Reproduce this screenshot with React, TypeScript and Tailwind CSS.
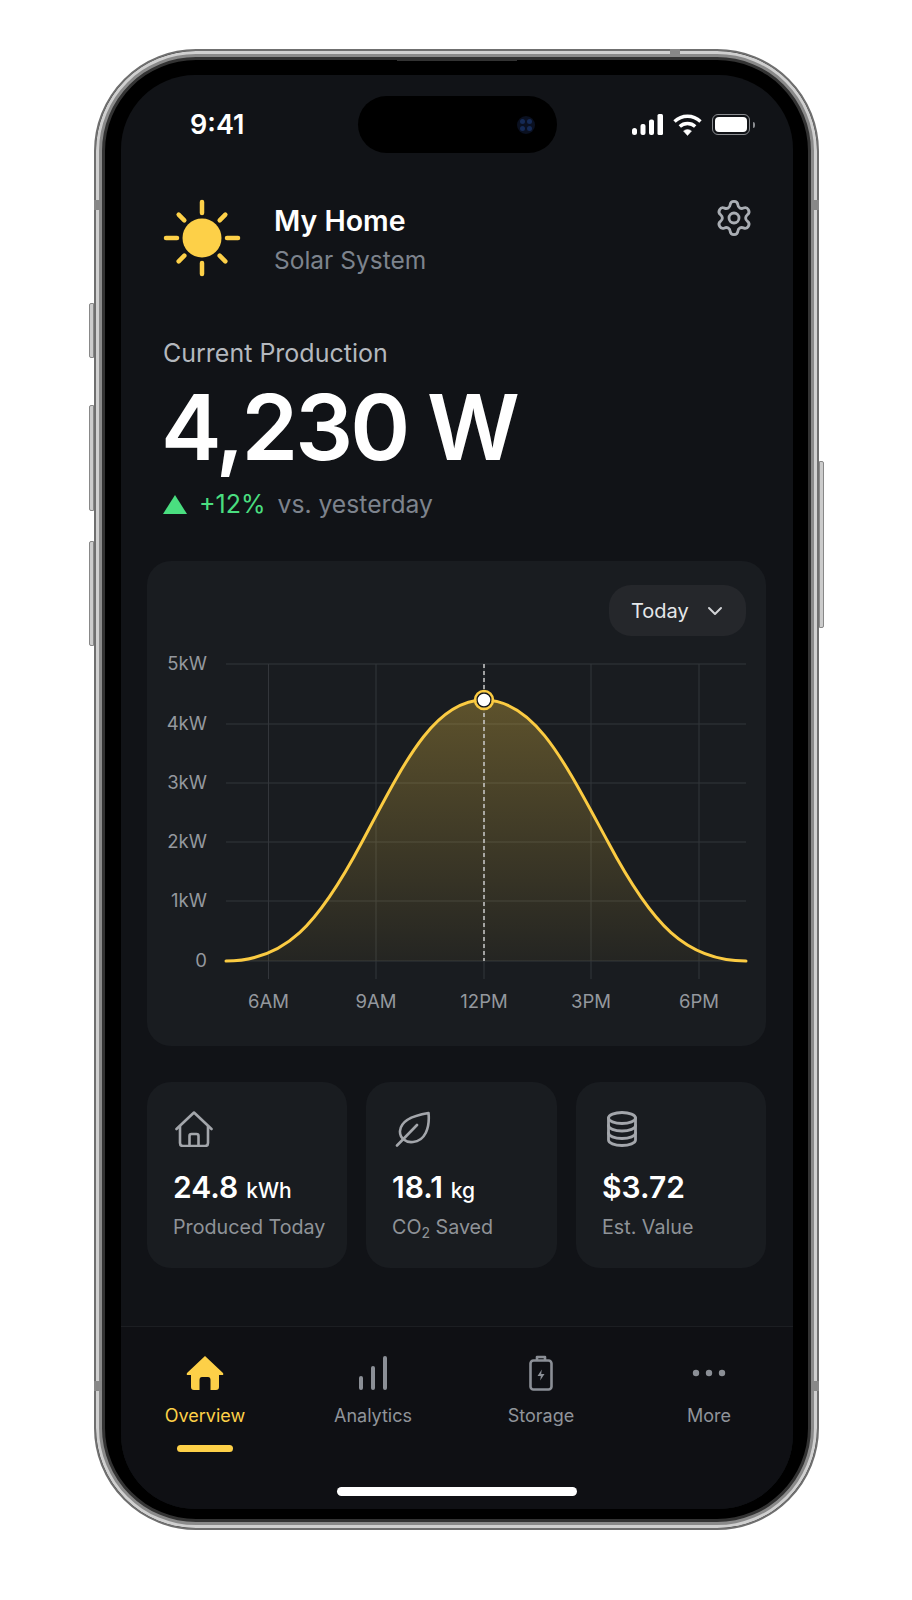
import { Settings, ChevronDown } from "lucide-react";

const yLabels = [
  { label: "5kW", y: 664 },
  { label: "4kW", y: 724 },
  { label: "3kW", y: 783 },
  { label: "2kW", y: 842 },
  { label: "1kW", y: 901 },
  { label: "0", y: 961 },
];

const xLabels = [
  { label: "6AM", x: 268.5 },
  { label: "9AM", x: 376 },
  { label: "12PM", x: 484 },
  { label: "3PM", x: 591 },
  { label: "6PM", x: 699 },
];

const curve =
  "M226 961 C285 961 318 925 362 842 C404 763 434 700 484 700 C535 700 565 763 608 842 C652 925 686 961 746 961";

function Sun() {
  const rays = [0, 45, 90, 135, 180, 225, 270, 315];
  return (
    <svg width="78" height="78" viewBox="0 0 78 78" className="shrink-0">
      <circle cx="39" cy="39" r="19.5" fill="#fdd048" />
      {rays.map((r) => (
        <line
          key={r}
          x1="39"
          y1={r % 90 === 0 ? 3 : 6}
          x2="39"
          y2={r % 90 === 0 ? 14 : 14}
          stroke="#fdd048"
          strokeWidth="4.5"
          strokeLinecap="round"
          transform={`rotate(${r} 39 39)`}
        />
      ))}
    </svg>
  );
}

function StatusIcons() {
  return (
    <div className="flex items-center gap-[10px] pr-[38px]">
      <svg width="31" height="22" viewBox="0 0 31 22" fill="#fff">
        <rect x="0" y="14" width="5" height="7" rx="2.5" />
        <rect x="8.5" y="10" width="5" height="11" rx="2" />
        <rect x="17" y="5.5" width="5" height="15.5" rx="2" />
        <rect x="25.5" y="0" width="5.5" height="21" rx="1.5" />
      </svg>
      <svg width="29" height="22" viewBox="0 0 29 22" fill="none" stroke="#fff">
        <path d="M1.5 7.5 C9 0.5 20 0.5 27.5 7.5" strokeWidth="3.4" />
        <path d="M6.8 12.5 C11 8.5 18 8.5 22.2 12.5" strokeWidth="3.4" />
        <path d="M10.5 17 L14.5 21.5 L18.5 17 C16 15 13 15 10.5 17Z" fill="#fff" strokeWidth="0.5" />
      </svg>
      <div className="flex items-center gap-[3px]">
        <div className="flex h-[21px] w-[38px] rounded-[6px] border border-[#8b8d91] p-[2px]">
          <div className="flex-1 rounded-[4px] bg-white" />
        </div>
        <div className="h-[6px] w-[2px] rounded-r-full bg-[#8b8d91]" />
      </div>
    </div>
  );
}

function Chart() {
  return (
    <svg viewBox="147 650 620 380" width="620" height="380" className="block">
      <defs>
        <linearGradient id="fill" x1="0" y1="0" x2="0" y2="1">
          <stop offset="0%" stopColor="#fdd048" stopOpacity="0.3" />
          <stop offset="100%" stopColor="#fdd048" stopOpacity="0.05" />
        </linearGradient>
      </defs>
      {yLabels.map((l) => (
        <g key={l.label}>
          <line x1="226" x2="746" y1={l.y} y2={l.y} stroke="#33363b" strokeWidth="1" />
          <text x="207" y={l.y + 6} textAnchor="end" fontSize="18.5" fill="#94989e">
            {l.label}
          </text>
        </g>
      ))}
      {xLabels.map((l) => (
        <g key={l.label}>
          <line x1={l.x} x2={l.x} y1="664" y2="979" stroke="#33363b" strokeWidth="1" />
          <text x={l.x} y="1008" textAnchor="middle" fontSize="18.5" fill="#94989e">
            {l.label}
          </text>
        </g>
      ))}
      <path d={curve + " Z"} fill="url(#fill)" />
      <line x1="484" x2="484" y1="664" y2="961" stroke="#c9c9c9" strokeWidth="1.5" strokeDasharray="4 3" />
      <path d={curve} fill="none" stroke="#fbcb42" strokeWidth="3" strokeLinecap="round" />
      <circle cx="484" cy="700" r="7" fill="#fff" stroke="#16181c" strokeWidth="1.5" />
      <circle cx="484" cy="700" r="9" fill="none" stroke="#fbcb42" strokeWidth="2.5" />
    </svg>
  );
}

function HouseIcon() {
  return (
    <svg width="38" height="36" viewBox="0 0 38 36" fill="none" stroke="#a3a6ab" strokeWidth="2.6" strokeLinejoin="round" strokeLinecap="round" className="ml-[2px]">
      <path d="M1.5 18 L19 1.5 L36.5 18" />
      <path d="M5 15.5 V32 Q5 35 8 35 H30 Q33 35 33 32 V15.5" />
      <path d="M14.5 35 V25 Q14.5 23 16.5 23 H21.5 Q23.5 23 23.5 25 V35" />
    </svg>
  );
}

function LeafIcon() {
  return (
    <svg width="36" height="36" viewBox="0 0 36 36" fill="none" stroke="#a3a6ab" strokeWidth="2.6" strokeLinejoin="round" strokeLinecap="round" className="ml-[3px]">
      <path d="M33.5 2 C21 4 6 8 5 20 C4.5 27 11 32 18 31 C30 30 35 17 33.5 2 Z" />
      <path d="M2 34.5 L22 14" />
    </svg>
  );
}

function CoinsIcon() {
  return (
    <svg width="30" height="36" viewBox="0 0 30 36" fill="none" stroke="#a3a6ab" strokeWidth="2.8" strokeLinecap="round" className="ml-[5px]">
      <ellipse cx="15" cy="7" rx="13.5" ry="5.5" />
      <path d="M1.5 7 V29 C1.5 32 7.5 34.5 15 34.5 C22.5 34.5 28.5 32 28.5 29 V7" />
      <path d="M1.5 14.5 C1.5 17.5 7.5 20 15 20 C22.5 20 28.5 17.5 28.5 14.5" />
      <path d="M1.5 22 C1.5 25 7.5 27.5 15 27.5 C22.5 27.5 28.5 25 28.5 22" />
    </svg>
  );
}

function StatCard({
  icon,
  value,
  unit,
  label,
  className,
}: {
  icon: React.ReactNode;
  value: string;
  unit?: string;
  label: React.ReactNode;
  className: string;
}) {
  return (
    <div className={`flex h-[186px] flex-col rounded-[24px] bg-[#191c20] pt-[29px] pl-[26px] ${className}`}>
      <div className="flex h-[36px] items-center">{icon}</div>
      <div className="mt-[20px] flex h-[40px] items-baseline gap-[8px] leading-[40px]">
        <span className="text-[30px] font-semibold text-white">{value}</span>
        {unit && <span className="text-[21px] font-medium text-white">{unit}</span>}
      </div>
      <div className="mt-[6px] text-[19.7px] leading-[28px] text-[#8f9398]">{label}</div>
    </div>
  );
}

function NavHome() {
  return (
    <svg width="38" height="34" viewBox="0 0 38 34" fill="#fdd048">
      <path d="M19 0 L37 17 Q38 19 36 19 H33 V31 Q33 34 30 34 H24.5 V24 Q24.5 21 22 21 H16 Q13.5 21 13.5 24 V34 H8 Q5 34 5 31 V19 H2 Q0 19 1 17 Z" />
    </svg>
  );
}

function NavBars() {
  return (
    <svg width="30" height="34" viewBox="0 0 30 34" fill="none" stroke="#8b8f96" strokeWidth="4" strokeLinecap="round">
      <path d="M3 32 V22" />
      <path d="M15 32 V12" />
      <path d="M27 32 V2" />
    </svg>
  );
}

function NavBattery() {
  return (
    <svg width="24" height="36" viewBox="0 0 24 36" fill="none" stroke="#8b8f96" strokeWidth="2.6" strokeLinejoin="round">
      <rect x="1.5" y="5.5" width="21" height="29" rx="3" />
      <path d="M8 5.5 V2 H16 V5.5" />
      <path d="M12.8 14.5 L8.5 21 H11.8 L11.2 25.5 L15.5 19 H12.2 Z" fill="#8b8f96" stroke="none" />
    </svg>
  );
}

function NavDots() {
  return (
    <svg width="34" height="34" viewBox="0 0 34 34" fill="#8b8f96">
      <circle cx="4" cy="17" r="3.2" />
      <circle cx="17" cy="17" r="3.2" />
      <circle cx="30" cy="17" r="3.2" />
    </svg>
  );
}

function NavItem({ icon, label, active }: { icon: React.ReactNode; label: string; active?: boolean }) {
  return (
    <div className="flex flex-col items-center">
      <div className="flex h-[36px] items-center justify-center">{icon}</div>
      <div className={`mt-[11px] text-[18px] leading-[28px] ${active ? "text-[#fdd048]" : "text-[#90949a]"}`}>
        {label}
      </div>
      {active && <div className="mt-[15px] h-[7px] w-[56px] rounded-full bg-[#fdd048]" />}
    </div>
  );
}

export default function App() {
  return (
    <div className="h-[1600px] bg-white pt-[49px] pl-[94px] font-[Inter,sans-serif]">
      <div className="relative h-[1481px] w-[725px] rounded-[102px] border-[2px] border-[#6f6f6f] bg-black pt-[24px] pr-[24px] pb-[19px] pl-[25px] shadow-[inset_0_0_0_3px_#d0d0d0,inset_0_0_0_6px_#8a8a8a,inset_0_0_0_9px_#333]">
        {/* side buttons */}
        <div className="absolute top-[252px] -left-[7px] h-[55px] w-[5px] rounded-l-[2px] border border-[#888] bg-[#ccc]" />
        <div className="absolute top-[354px] -left-[7px] h-[106px] w-[5px] rounded-l-[2px] border border-[#888] bg-[#ccc]" />
        <div className="absolute top-[490px] -left-[7px] h-[105px] w-[5px] rounded-l-[2px] border border-[#888] bg-[#ccc]" />
        <div className="absolute top-[410px] -right-[7px] h-[167px] w-[5px] rounded-r-[2px] border border-[#888] bg-[#ccc]" />
        {/* speaker slit */}
        <div className="absolute top-[8px] left-[301px] h-[2px] w-[120px] bg-[#333]" />
        {/* antenna bands */}
        <div className="absolute top-[149px] -left-[2px] h-[10px] w-[8px] bg-[#888]" />
        <div className="absolute top-[149px] -right-[2px] h-[10px] w-[8px] bg-[#888]" />
        <div className="absolute top-[1330px] -left-[2px] h-[10px] w-[8px] bg-[#888]" />
        <div className="absolute top-[1330px] -right-[2px] h-[10px] w-[8px] bg-[#888]" />
        <div className="absolute -top-[2px] left-[574px] h-[8px] w-[10px] bg-[#888]" />

        <div className="flex h-full flex-col overflow-hidden rounded-[74px] bg-[#111317]">
          {/* status bar */}
          <div className="grid grid-cols-[1fr_199px_1fr] items-center pt-[21px]">
            <div className="pt-[1px] pl-[69px] text-[27px] font-semibold text-white">9:41</div>
            <div className="flex h-[57px] items-center justify-end rounded-full bg-black pr-[22px]">
              <div className="grid grid-cols-2 gap-[2px] rounded-full bg-[#0a1020] p-[3px]">
                <div className="h-[5px] w-[5px] rounded-full bg-[#152a55]" />
                <div className="h-[5px] w-[5px] rounded-full bg-[#152a55]" />
                <div className="h-[5px] w-[5px] rounded-full bg-[#152a55]" />
                <div className="h-[5px] w-[5px] rounded-full bg-[#152a55]" />
              </div>
            </div>
            <div className="flex justify-end">
              <StatusIcons />
            </div>
          </div>

          {/* header */}
          <div className="mt-[46px] flex items-start pr-[39px] pl-[42px]">
            <Sun />
            <div className="ml-[33px] flex-1 pt-[3px]">
              <div className="text-[28.5px] leading-[38px] font-semibold text-white">My Home</div>
              <div className="mt-[1px] text-[24.5px] leading-[38px] text-[#7d838d]">Solar System</div>
            </div>
            <Settings size={40} strokeWidth={1.7} className="-mt-[1px] text-[#a9adb3]" />
          </div>

          {/* production */}
          <div className="mt-[56px] pl-[42px]">
            <div className="text-[25px] leading-[36px] text-[#b4b8be]">Current Production</div>
            <div className="mt-[6px] -ml-[2px] text-[91px] leading-[100px] font-semibold tracking-[-3px] text-white">4,230 W</div>
            <div className="mt-[9px] flex items-center">
              <div className="h-0 w-0 border-x-[12px] border-b-[19px] border-x-transparent border-b-[#4ade80]" />
              <span className="ml-[12px] text-[25px] leading-[36px] text-[#4ade80]">+12%</span>
              <span className="ml-[12px] text-[24.7px] leading-[36px] text-[#7d838d]">vs. yesterday</span>
            </div>
          </div>

          {/* chart card */}
          <div className="mt-[39px] mr-[27px] ml-[26px] h-[485px] rounded-[24px] bg-[#191c20]">
            <div className="flex justify-end pt-[24px] pr-[20px] pb-[14px]">
              <div className="flex h-[51px] w-[137px] items-center gap-[14px] rounded-[22px] bg-[#25272b] pl-[22px] text-[20px] text-[#e5e7ea]">
                Today
                <ChevronDown size={24} strokeWidth={2} className="text-[#d1d3d6]" />
              </div>
            </div>
            <Chart />
          </div>

          {/* stats */}
          <div className="mt-[36px] mr-[27px] ml-[26px] flex justify-between">
            <StatCard className="w-[200px]" icon={<HouseIcon />} value="24.8" unit="kWh" label="Produced Today" />
            <StatCard
              className="w-[191px]"
              icon={<LeafIcon />}
              value="18.1"
              unit="kg"
              label={
                <>
                  CO<sub className="text-[14px]">2</sub> Saved
                </>
              }
            />
            <StatCard className="w-[190px]" icon={<CoinsIcon />} value="$3.72" label="Est. Value" />
          </div>

          {/* bottom nav */}
          <div className="mt-auto h-[183px] border-t border-[#1c1e22] bg-[#0f1014]">
            <div className="grid h-[160px] grid-cols-4 pt-[28px]">
              <NavItem icon={<NavHome />} label="Overview" active />
              <NavItem icon={<NavBars />} label="Analytics" />
              <NavItem icon={<NavBattery />} label="Storage" />
              <NavItem icon={<NavDots />} label="More" />
            </div>
            <div className="mx-auto h-[9px] w-[240px] rounded-full bg-white" />
          </div>
        </div>
      </div>
    </div>
  );
}
